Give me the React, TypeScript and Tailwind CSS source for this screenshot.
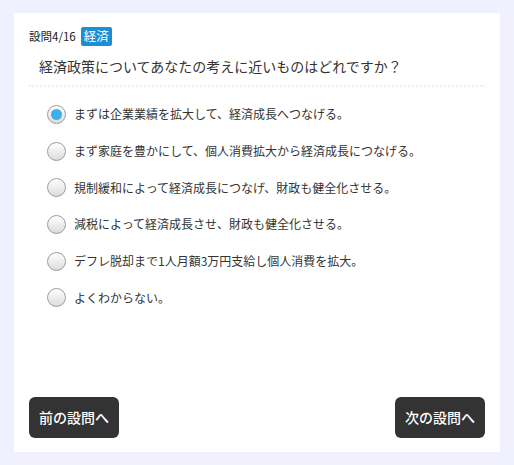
import React, { useState } from 'react';

const options = [
    'まずは企業業績を拡大して、経済成長へつなげる。',
    'まず家庭を豊かにして、個人消費拡大から経済成長につなげる。',
    '規制緩和によって経済成長につなげ、財政も健全化させる。',
    '減税によって経済成長させ、財政も健全化させる。',
    'デフレ脱却まで1人月額3万円支給し個人消費を拡大。',
    'よくわからない。',
];

const Radio: React.FC<{ checked: boolean }> = ({ checked }) => (
    <span className="flex h-[19px] w-[19px] shrink-0 items-center justify-center rounded-full border border-[#9c9c9c] bg-gradient-to-b from-white to-[#dcdcdc]">
        {checked && <span className="h-[11px] w-[11px] rounded-full bg-[#3bb0ec]" />}
    </span>
);

export default function App() {
    const [selected, setSelected] = useState(0);

    return (
        <div
            className="h-[465px] w-[514px] bg-[#f0f0fe] pt-[13px] pb-[13px] pl-[14px] pr-[14px]"
            style={{ fontFamily: '"Noto Sans CJK JP", "Noto Sans", sans-serif' }}
        >
            <div className="flex h-full flex-col bg-white pt-[14px] pl-[15px] pr-[15px] pb-[14px]">
                <div className="flex items-center gap-[5px]">
                    <span className="text-[11.5px] leading-none text-[#222]">設問4/16</span>
                    <span className="flex h-[19px] items-center rounded-[2px] bg-[#1a8fd6] px-[3px] text-[12.5px] leading-none text-white">
                        経済
                    </span>
                </div>
                <p className="mt-[10px] pl-[10px] text-[14px] leading-[20px] text-[#333]">
                    経済政策についてあなたの考えに近いものはどれですか？
                </p>
                <div className="mt-[9px] border-t-2 border-dotted border-[#eeeef6]" />
                <ul className="mt-[9px] flex flex-col pl-[18px]">
                    {options.map((opt, i) => (
                        <li
                            key={i}
                            onClick={() => setSelected(i)}
                            className="flex h-[36.7px] cursor-pointer items-center gap-[8px] text-[12px] text-[#333]"
                        >
                            <Radio checked={selected === i} />
                            <span>{opt}</span>
                        </li>
                    ))}
                </ul>
                <div className="mt-auto flex justify-between">
                    <button className="h-[41px] w-[90px] rounded-[6px] bg-[#333] text-[14px] font-medium text-white">
                        前の設問へ
                    </button>
                    <button className="h-[41px] w-[90px] rounded-[6px] bg-[#333] text-[14px] font-medium text-white">
                        次の設問へ
                    </button>
                </div>
            </div>
        </div>
    );
}
